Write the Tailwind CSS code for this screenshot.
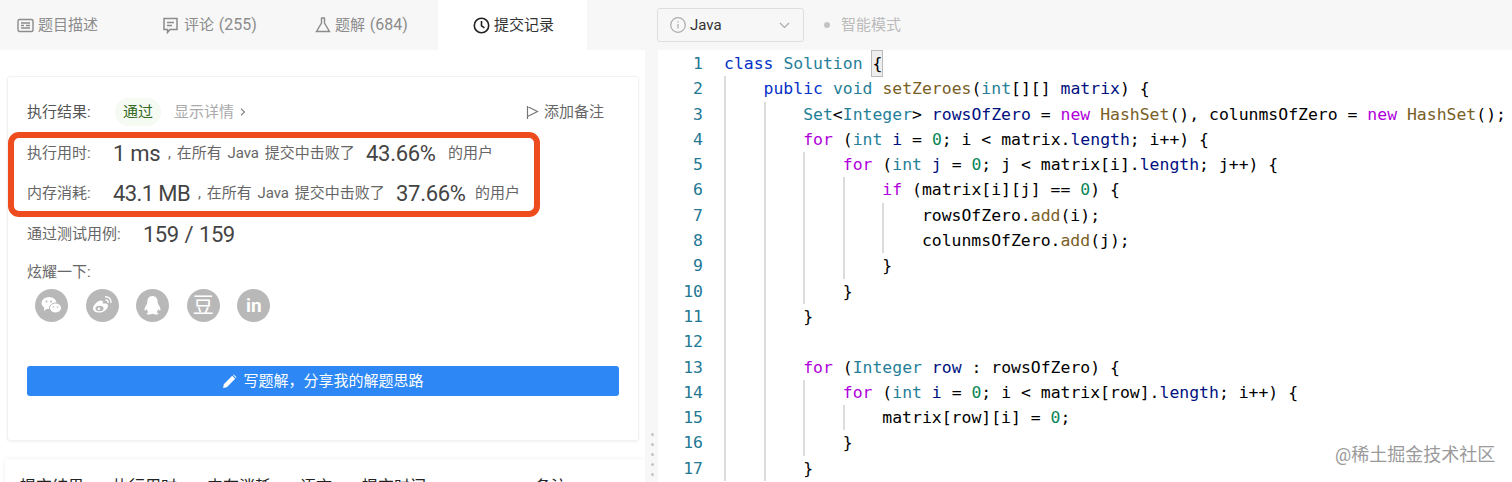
<!DOCTYPE html>
<html lang="zh-CN">
<head>
    <meta charset="UTF-8" />
    <title>提交记录</title>
    <script src="https://cdn.jsdelivr.net/npm/@tailwindcss/browser@4"></script>
</head>
<body class="bg-white">
<div class="relative flex h-[482px] w-[1512px] overflow-hidden font-['Roboto','Noto_Sans_CJK_SC',sans-serif] text-[15px]">

    <!-- left pane -->
    <div class="w-[645px] shrink-0">
        <div class="flex h-[50px] bg-[#f7f7f7] text-[#8c8c8c]">
            <div class="flex w-[146px] items-center gap-[4px] pl-[17px]">
                <svg class="size-[17px]" viewBox="0 0 17 17" fill="none" stroke="#8c8c8c" stroke-width="1.4"><rect x="1" y="2.5" width="15" height="12" rx="1.5"/><path d="M4 6h9M4 8.5h3M9 8.5h4M4 11h9"/></svg>
                <span>题目描述</span>
            </div>
            <div class="flex w-[146px] items-center gap-[5px] pl-[16px]">
                <svg class="size-[17px]" viewBox="0 0 17 17" fill="none" stroke="#8c8c8c" stroke-width="1.5"><path d="M2 1.5h13v11H8l-2.5 3v-3H2z"/><path d="M5 5.5h7M5 8.500h5"/></svg>
                <span>评论 <span class="ml-[1px] text-[16px]">(255)</span></span>
            </div>
            <div class="flex w-[146px] items-center gap-[4px] pl-[23px]">
                <svg class="size-[16px]" viewBox="0 0 16 16" fill="none" stroke="#8c8c8c" stroke-width="1.4"><path d="M6 1h4M6.500 1v5L1.500 14.500h13L9.500 6V1"/></svg>
                <span>题解 <span class="ml-[1px] text-[16px]">(684)</span></span>
            </div>
            <div class="flex w-[149px] items-center gap-[4px] bg-white pl-[35px] text-[#333]">
                <svg class="size-[17px]" viewBox="0 0 17 17" fill="none" stroke="#222" stroke-width="1.6"><circle cx="8.500" cy="8.500" r="7.200"/><path d="M8.500 4v4.800l3 2"/></svg>
                <span>提交记录</span>
            </div>
        </div>

        <div class="ml-[7px] mt-[26px] h-[365px] w-[632px] rounded-[3px] border border-[#f1f1f1] pt-[15px] text-[#666] shadow-[0_1px_3px_rgba(0,0,0,0.05)]">
            <div class="flex h-[40px] items-center pl-[19px] pr-[34px]">
                <span class="w-[88px] text-[#555]">执行结果:</span>
                <span class="rounded-full bg-[#f5faf2] px-[8px] py-[3px] text-[#33691e]">通过</span>
                <span class="ml-[13px] text-[#aaa]">显示详情</span>
                <svg class="ml-[5px] size-[8px]" viewBox="0 0 8 8" fill="none" stroke="#888" stroke-width="1.2"><path d="M2 .8 5.500 4 2 7.200"/></svg>
                <svg class="ml-auto size-[15px]" viewBox="0 0 15 15" fill="none" stroke="#777" stroke-width="1.2"><path d="M1.500 1v13M1.500 1.500l10 5-10 5"/></svg>
                <span class="ml-[3px]">添加备注</span>
            </div>

            <div class="h-[85px] w-[532px] rounded-[11px] border-[6px] border-[#ee4b1e] pl-[13px]">
                <div class="flex h-[30px] items-center">
                    <span class="w-[86px] shrink-0">执行用时:</span>
                    <span class="w-[55px] shrink-0 text-[22px] tracking-[-0.3px] text-[#444]">1 ms</span>
                    <span class="w-[198px] shrink-0 [word-spacing:2px]">, 在所有 Java 提交中击败了</span>
                    <span class="w-[82px] shrink-0 text-[22px] tracking-[-0.3px] text-[#444]">43.66%</span>
                    <span>的用户</span>
                </div>
                <div class="mt-[10px] flex h-[30px] items-center">
                    <span class="w-[86px] shrink-0">内存消耗:</span>
                    <span class="w-[85px] shrink-0 text-[22px] tracking-[-0.6px] text-[#444]">43.1 MB</span>
                    <span class="w-[198px] shrink-0 [word-spacing:2px]">, 在所有 Java 提交中击败了</span>
                    <span class="w-[79px] shrink-0 text-[22px] tracking-[-0.3px] text-[#444]">37.66%</span>
                    <span>的用户</span>
                </div>
            </div>

            <div class="flex h-[34px] items-center pl-[19px]">
                <span class="w-[116px] shrink-0">通过测试用例:</span>
                <span class="text-[22px] tracking-[-0.5px] text-[#444] [word-spacing:1px]">159 / 159</span>
            </div>

            <div class="mt-[10px] flex h-[22px] items-center pl-[19px]">炫耀一下:</div>

            <div class="ml-[27px] mt-[6px] flex gap-[17.6px]">
                <div class="flex size-[33px] items-center justify-center rounded-full bg-[#b8b8b8]">
                    <svg class="size-[25px]" viewBox="0 0 25 25" fill="#fff"><ellipse cx="10" cy="10" rx="7.500" ry="6"/><path d="M5.500 13.500 5 18l4-3z"/><ellipse cx="16.500" cy="15" rx="6" ry="5" stroke="#b8b8b8"/><circle cx="7.500" cy="8.500" r="1" fill="#b8b8b8"/><circle cx="12" cy="8.500" r="1" fill="#b8b8b8"/><circle cx="14.500" cy="14" r=".8" fill="#b8b8b8"/><circle cx="18.500" cy="14" r=".8" fill="#b8b8b8"/></svg>
                </div>
                <div class="flex size-[33px] items-center justify-center rounded-full bg-[#b8b8b8]">
                    <svg class="size-[25px]" viewBox="0 0 25 25" fill="none"><path d="M3 15.500c0-3.500 5-8 8-8 2 0 2.300 1.800 1.800 3.300 2-.7 5.200-.7 5.200 1.900 0 3.300-4.500 6.800-8.500 6.800S3 18 3 15.500z" fill="#fff"/><ellipse cx="9.500" cy="15.500" rx="4" ry="2.800" fill="#b8b8b8"/><circle cx="9" cy="15.700" r="1.300" fill="#fff"/><path d="M15 3.800c3.500-.5 6.500 2.500 6 6M15.500 7c1.500-.2 3 1 2.700 2.800" stroke="#fff" stroke-width="1.400"/></svg>
                </div>
                <div class="flex size-[33px] items-center justify-center rounded-full bg-[#b8b8b8]">
                    <svg class="size-[23px]" viewBox="0 0 23 23" fill="#fff"><path d="M11.500 2C7.800 2 6.300 5 6.300 8c0 1.200-.3 2-1.300 3.500C3.800 13.300 3 16 3.800 16.500c.6.300 1.400-.8 1.800-1.500.3 1.300 1 2.400 1.800 3.200-1.300.5-2 1.100-1.600 1.800.5.800 4 .7 5.700-.3 1.700 1 5.200 1.100 5.700.3.400-.7-.3-1.300-1.600-1.800.8-.8 1.500-1.900 1.800-3.200.4.700 1.200 1.800 1.800 1.500.8-.5 0-3.200-1.200-5-1-1.500-1.300-2.300-1.300-3.500 0-3-1.500-6-5.200-6z"/></svg>
                </div>
                <div class="flex size-[33px] items-center justify-center rounded-full bg-[#b8b8b8] text-[21px] leading-none text-white">豆</div>
                <div class="flex size-[33px] items-center justify-center rounded-full bg-[#b8b8b8] text-[19px] font-bold leading-none text-white">in</div>
            </div>

            <div class="ml-[19px] mt-[44px] flex h-[30px] w-[592px] items-center justify-center gap-[6px] rounded-[3px] bg-[#2d88f5] text-white">
                <svg class="size-[15px]" viewBox="0 0 14 14" fill="#fff"><path d="M1 13l.7-3.500L9.500 1.700l2.800 2.800-7.800 7.800zM10.300 1l.7-.5 2.500 2.500-.5.700z"/></svg>
                <span>写题解，分享我的解题思路</span>
            </div>
        </div>

        <div class="ml-[5px] mt-[18px] flex h-[60px] w-[640px] rounded-[3px] pl-[15px] pt-[16px] text-[16px] text-[#222] shadow-[0_0_4px_rgba(0,0,0,0.08)]">
            <span class="w-[93px]">提交结果</span>
            <span class="w-[94px]">执行用时</span>
            <span class="w-[93px]">内存消耗</span>
            <span class="w-[62px]">语言</span>
            <span class="w-[173px]">提交时间</span>
            <span>备注</span>
        </div>
    </div>

    <!-- splitter -->
    <div class="flex w-[13px] shrink-0 flex-col items-center justify-end gap-[7px] bg-[#f7f7f7] pb-[6px] pl-[1px]">
        <i class="size-[3px] rounded-full bg-[#c4c4c4]"></i>
        <i class="size-[3px] rounded-full bg-[#c4c4c4]"></i>
        <i class="size-[3px] rounded-full bg-[#c4c4c4]"></i>
        <i class="size-[3px] rounded-full bg-[#c4c4c4]"></i>
        <i class="size-[3px] rounded-full bg-[#c4c4c4]"></i>
    </div>

    <!-- right pane -->
    <div class="min-w-0 flex-1">
        <div class="flex h-[50px] items-center bg-[#f7f7f7]">
            <div class="-ml-px flex h-[34px] w-[147px] items-center rounded-[3px] border border-[#dedede] pl-[12px] text-[#333]">
                <svg class="size-[16px]" viewBox="0 0 16 16" fill="none" stroke="#aaa" stroke-width="1.200"><circle cx="8" cy="8" r="7.300"/><path d="M8 7v4.500M8 4.200v1.300"/></svg>
                <span class="ml-[4px]">Java</span>
                <svg class="ml-auto mr-[13px] size-[11px]" viewBox="0 0 11 11" fill="none" stroke="#aaa" stroke-width="1.200"><path d="M1 3l4.500 4.500L10 3"/></svg>
            </div>
            <i class="ml-[20px] size-[6px] rounded-full bg-[#c4c4c4]"></i>
            <span class="ml-[11px] text-[#bbb]">智能模式</span>
        </div>

        <div class="h-[432px] pt-[1px] font-['DejaVu_Sans_Mono',monospace] text-[16.45px] leading-[25.3px] text-[#000] [&>div]:whitespace-pre">
            <div class="flex h-[25.3px]"><span class="w-[45px] text-right text-[#237893]">1</span><span class="ml-[21px] text-[#0431c8]">class</span><span> </span><span class="text-[#267f99]">Solution</span><span> </span><span class="bg-[#eee] outline outline-[#bbb]">{</span></div>
            <div class="flex h-[25.3px]"><span class="w-[45px] text-right text-[#237893]">2</span><span class="ml-[21px] w-[4ch] border-l-2 border-[#dcdcdc]"></span><span><span class="text-[#0431c8]">public</span> <span class="text-[#267f99]">void</span> <span class="text-[#795e26]">setZeroes</span>(<span class="text-[#267f99]">int</span>[][] <span class="text-[#001080]">matrix</span>) {</span></div>
            <div class="flex h-[25.3px]"><span class="w-[45px] text-right text-[#237893]">3</span><span class="ml-[21px] w-[4ch] border-l-2 border-[#dcdcdc]"></span><span class="w-[4ch] border-l-2 border-[#dcdcdc]"></span><span><span class="text-[#267f99]">Set</span>&lt;<span class="text-[#267f99]">Integer</span>&gt; <span class="text-[#001080]">rowsOfZero</span> = <span class="text-[#af00db]">new</span> <span class="text-[#795e26]">HashSet</span>(), colunmsOfZero = <span class="text-[#af00db]">new</span> <span class="text-[#795e26]">HashSet</span>();</span></div>
            <div class="flex h-[25.3px]"><span class="w-[45px] text-right text-[#237893]">4</span><span class="ml-[21px] w-[4ch] border-l-2 border-[#dcdcdc]"></span><span class="w-[4ch] border-l-2 border-[#dcdcdc]"></span><span><span class="text-[#af00db]">for</span> (<span class="text-[#267f99]">int</span> <span class="text-[#001080]">i</span> = <span class="text-[#098658]">0</span>; i &lt; matrix.<span class="text-[#001080]">length</span>; i++) {</span></div>
            <div class="flex h-[25.3px]"><span class="w-[45px] text-right text-[#237893]">5</span><span class="ml-[21px] w-[4ch] border-l-2 border-[#dcdcdc]"></span><span class="w-[4ch] border-l-2 border-[#dcdcdc]"></span><span class="w-[4ch] border-l-2 border-[#dcdcdc]"></span><span><span class="text-[#af00db]">for</span> (<span class="text-[#267f99]">int</span> <span class="text-[#001080]">j</span> = <span class="text-[#098658]">0</span>; j &lt; matrix[i].<span class="text-[#001080]">length</span>; j++) {</span></div>
            <div class="flex h-[25.3px]"><span class="w-[45px] text-right text-[#237893]">6</span><span class="ml-[21px] w-[4ch] border-l-2 border-[#dcdcdc]"></span><span class="w-[4ch] border-l-2 border-[#dcdcdc]"></span><span class="w-[4ch] border-l-2 border-[#dcdcdc]"></span><span class="w-[4ch] border-l-2 border-[#dcdcdc]"></span><span><span class="text-[#af00db]">if</span> (matrix[i][j] == <span class="text-[#098658]">0</span>) {</span></div>
            <div class="flex h-[25.3px]"><span class="w-[45px] text-right text-[#237893]">7</span><span class="ml-[21px] w-[4ch] border-l-2 border-[#dcdcdc]"></span><span class="w-[4ch] border-l-2 border-[#dcdcdc]"></span><span class="w-[4ch] border-l-2 border-[#dcdcdc]"></span><span class="w-[4ch] border-l-2 border-[#dcdcdc]"></span><span class="w-[4ch] border-l-2 border-[#dcdcdc]"></span><span>rowsOfZero.<span class="text-[#795e26]">add</span>(i);</span></div>
            <div class="flex h-[25.3px]"><span class="w-[45px] text-right text-[#237893]">8</span><span class="ml-[21px] w-[4ch] border-l-2 border-[#dcdcdc]"></span><span class="w-[4ch] border-l-2 border-[#dcdcdc]"></span><span class="w-[4ch] border-l-2 border-[#dcdcdc]"></span><span class="w-[4ch] border-l-2 border-[#dcdcdc]"></span><span class="w-[4ch] border-l-2 border-[#dcdcdc]"></span><span>colunmsOfZero.<span class="text-[#795e26]">add</span>(j);</span></div>
            <div class="flex h-[25.3px]"><span class="w-[45px] text-right text-[#237893]">9</span><span class="ml-[21px] w-[4ch] border-l-2 border-[#dcdcdc]"></span><span class="w-[4ch] border-l-2 border-[#dcdcdc]"></span><span class="w-[4ch] border-l-2 border-[#dcdcdc]"></span><span class="w-[4ch] border-l-2 border-[#dcdcdc]"></span><span>}</span></div>
            <div class="flex h-[25.3px]"><span class="w-[45px] text-right text-[#237893]">10</span><span class="ml-[21px] w-[4ch] border-l-2 border-[#dcdcdc]"></span><span class="w-[4ch] border-l-2 border-[#dcdcdc]"></span><span class="w-[4ch] border-l-2 border-[#dcdcdc]"></span><span>}</span></div>
            <div class="flex h-[25.3px]"><span class="w-[45px] text-right text-[#237893]">11</span><span class="ml-[21px] w-[4ch] border-l-2 border-[#dcdcdc]"></span><span class="w-[4ch] border-l-2 border-[#dcdcdc]"></span><span>}</span></div>
            <div class="flex h-[25.3px]"><span class="w-[45px] text-right text-[#237893]">12</span><span class="ml-[21px] w-[4ch] border-l-2 border-[#dcdcdc]"></span><span class="w-[4ch] border-l-2 border-[#dcdcdc]"></span></div>
            <div class="flex h-[25.3px]"><span class="w-[45px] text-right text-[#237893]">13</span><span class="ml-[21px] w-[4ch] border-l-2 border-[#dcdcdc]"></span><span class="w-[4ch] border-l-2 border-[#dcdcdc]"></span><span><span class="text-[#af00db]">for</span> (<span class="text-[#267f99]">Integer</span> <span class="text-[#001080]">row</span> : rowsOfZero) {</span></div>
            <div class="flex h-[25.3px]"><span class="w-[45px] text-right text-[#237893]">14</span><span class="ml-[21px] w-[4ch] border-l-2 border-[#dcdcdc]"></span><span class="w-[4ch] border-l-2 border-[#dcdcdc]"></span><span class="w-[4ch] border-l-2 border-[#dcdcdc]"></span><span><span class="text-[#af00db]">for</span> (<span class="text-[#267f99]">int</span> <span class="text-[#001080]">i</span> = <span class="text-[#098658]">0</span>; i &lt; matrix[row].<span class="text-[#001080]">length</span>; i++) {</span></div>
            <div class="flex h-[25.3px]"><span class="w-[45px] text-right text-[#237893]">15</span><span class="ml-[21px] w-[4ch] border-l-2 border-[#dcdcdc]"></span><span class="w-[4ch] border-l-2 border-[#dcdcdc]"></span><span class="w-[4ch] border-l-2 border-[#dcdcdc]"></span><span class="w-[4ch] border-l-2 border-[#dcdcdc]"></span><span>matrix[row][i] = <span class="text-[#098658]">0</span>;</span></div>
            <div class="flex h-[25.3px]"><span class="w-[45px] text-right text-[#237893]">16</span><span class="ml-[21px] w-[4ch] border-l-2 border-[#dcdcdc]"></span><span class="w-[4ch] border-l-2 border-[#dcdcdc]"></span><span class="w-[4ch] border-l-2 border-[#dcdcdc]"></span><span>}</span></div>
            <div class="flex h-[25.3px]"><span class="w-[45px] text-right text-[#237893]">17</span><span class="ml-[21px] w-[4ch] border-l-2 border-[#dcdcdc]"></span><span class="w-[4ch] border-l-2 border-[#dcdcdc]"></span><span>}</span></div>
        </div>
    </div>

    <!-- watermark -->
    <div class="absolute left-[1335px] top-[444px] text-[18px] leading-[22px] text-[#9a9a9a]">@稀土掘金技术社区</div>
</div>
</body>
</html>
